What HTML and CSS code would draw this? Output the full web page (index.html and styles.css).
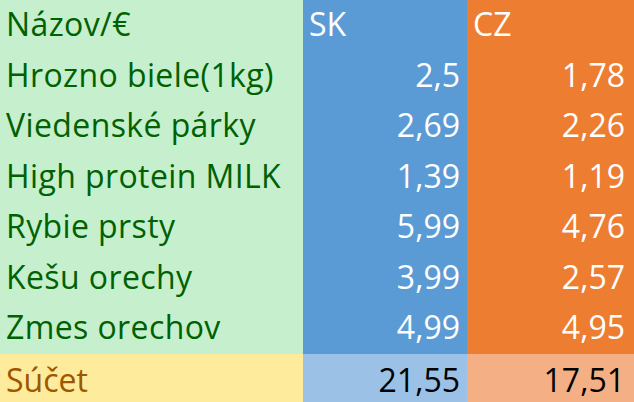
FILE: index.html
```html
<!DOCTYPE html>
<html lang="sk">
<head>
<meta charset="utf-8">
<title>Porovnanie cien</title>
<link rel="stylesheet" href="styles.css">
</head>
<body>
<div class="sheet">
  <div class="cell name">Názov/€</div>
  <div class="cell sk head">SK</div>
  <div class="cell cz head">CZ</div>

  <div class="cell name">Hrozno biele(1kg)</div>
  <div class="cell sk num">2,5</div>
  <div class="cell cz num">1,78</div>

  <div class="cell name">Viedenské párky</div>
  <div class="cell sk num">2,69</div>
  <div class="cell cz num">2,26</div>

  <div class="cell name">High protein MILK</div>
  <div class="cell sk num">1,39</div>
  <div class="cell cz num">1,19</div>

  <div class="cell name">Rybie prsty</div>
  <div class="cell sk num">5,99</div>
  <div class="cell cz num">4,76</div>

  <div class="cell name">Kešu orechy</div>
  <div class="cell sk num">3,99</div>
  <div class="cell cz num">2,57</div>

  <div class="cell name">Zmes orechov</div>
  <div class="cell sk num">4,99</div>
  <div class="cell cz num">4,95</div>

  <div class="cell total total-name">Súčet</div>
  <div class="cell total total-sk num">21,55</div>
  <div class="cell total total-cz num">17,51</div>
</div>
</body>
</html>
```

FILE: styles.css
```css
html, body {
  margin: 0;
  padding: 0;
  width: 634px;
  height: 402px;
  overflow: hidden;
}

.sheet {
  display: grid;
  grid-template-columns: 303px 164px 167px;
  grid-template-rows: repeat(7, 50.57px) 48px;
  font-family: "Open Sans", "Liberation Sans", sans-serif;
  font-size: 32px;
}

.cell {
  display: flex;
  align-items: flex-start;
  padding: 8px 7px 0 6px;
  line-height: 32px;
  white-space: nowrap;
  overflow: hidden;
}

.total {
  padding-top: 10px;
}

.name {
  background: #c6efce;
  color: #006100;
  letter-spacing: 0.4px;
}

.sk {
  background: #5b9bd5;
  color: #ffffff;
}

.cz {
  background: #ed7d31;
  color: #ffffff;
  padding-right: 9px;
}

.head {
  padding-left: 6px;
}

.num {
  justify-content: flex-end;
}

.total-name {
  background: #ffeb9c;
  color: #9c5700;
}

.total-sk {
  background: #9bc2e6;
  color: #000000;
}

.total-cz {
  background: #f4b084;
  color: #000000;
  padding-right: 9px;
}
```
